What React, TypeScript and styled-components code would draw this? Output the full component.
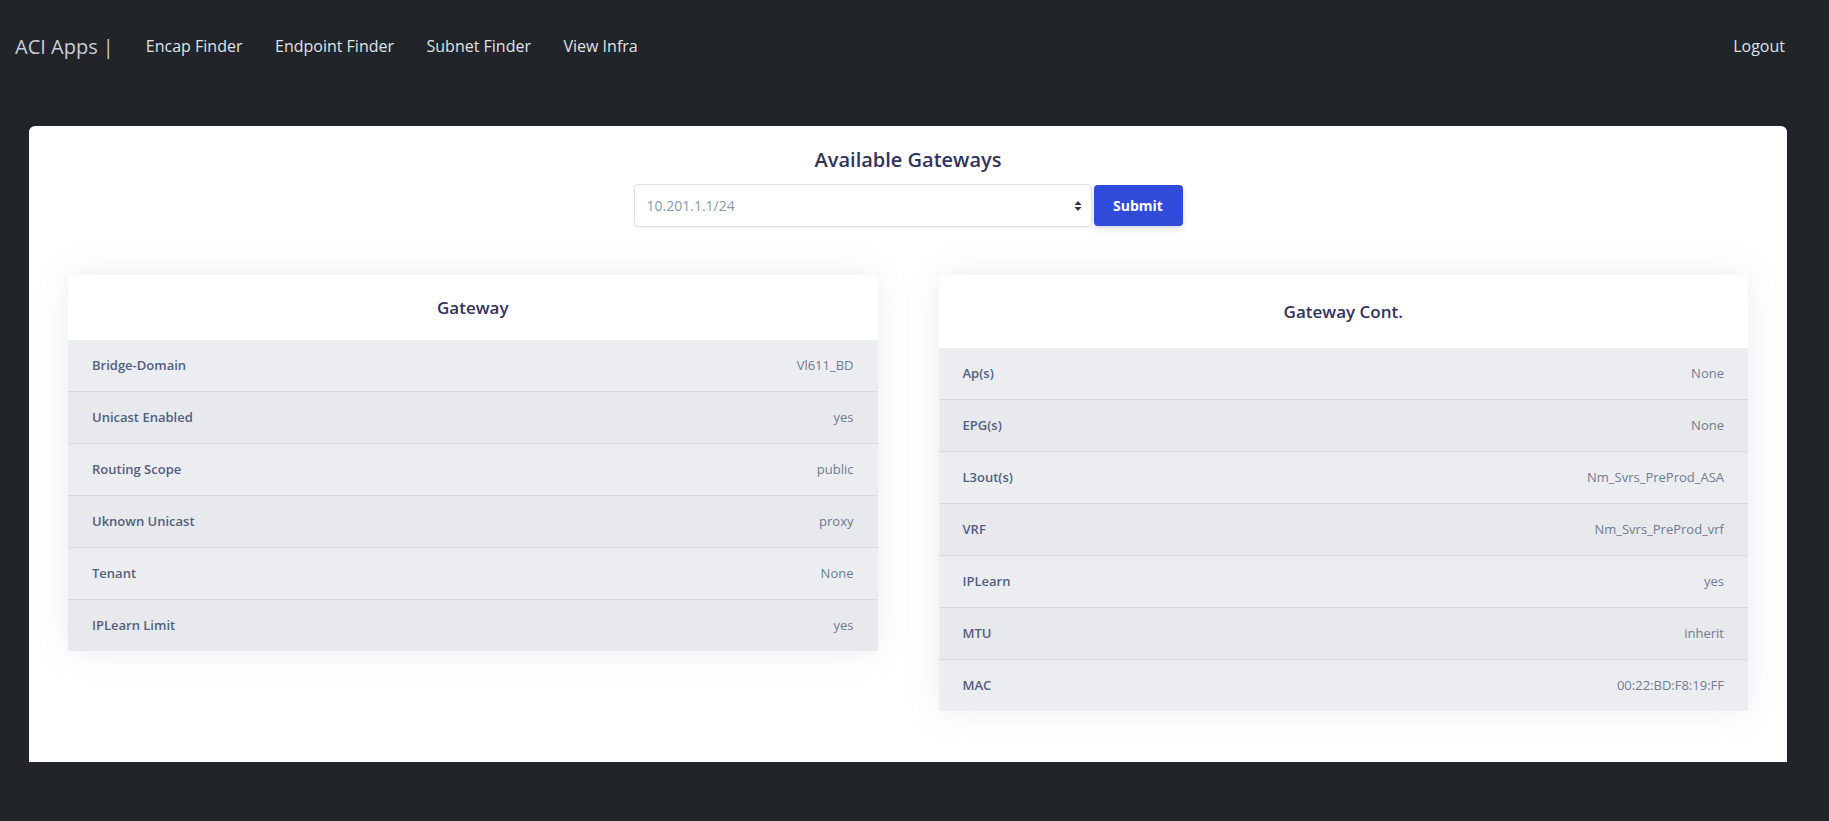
import React from 'react';
import styled, { createGlobalStyle } from 'styled-components';

const GlobalStyle = createGlobalStyle`
  html, body {
    margin: 0;
    padding: 0;
    background: #212429;
  }
  body {
    font-family: "Open Sans", "Noto Sans", sans-serif;
  }
  * {
    box-sizing: border-box;
  }
`;

const NavBar = styled.nav`
  height: 92px;
  display: flex;
  align-items: center;
  padding: 0 44px 0 15px;
`;

const Brand = styled.a`
  font-size: 20px;
  color: #c8cdd5;
  margin-right: 32px;
  text-decoration: none;
`;

const NavLinks = styled.ul`
  display: flex;
  gap: 32.5px;
  margin: 0;
  padding: 0;
  list-style: none;
  flex: 1;
`;

const NavLink = styled.a`
  font-size: 16px;
  color: #dfe3e9;
  text-decoration: none;
`;

const Panel = styled.main`
  margin: 34px 42px 0 29px;
  background: #fff;
  border-radius: 6px 6px 0 0;
  padding: 22px 39px 51px;
`;

const Title = styled.h2`
  margin: 0 0 12px;
  text-align: center;
  font-size: 20px;
  line-height: 24px;
  font-weight: 600;
  color: #32325d;
`;

const FormRow = styled.form`
  display: flex;
  justify-content: center;
  align-items: center;
  gap: 2px;
`;

const SelectWrap = styled.div`
  position: relative;
  width: 458px;
  height: 43px;
`;

const Select = styled.select`
  width: 100%;
  height: 100%;
  appearance: none;
  border: 1px solid #dee1e6;
  border-radius: 4px;
  padding: 0 12px;
  font-family: inherit;
  font-size: 14px;
  color: #8898aa;
  background: #fff;
  box-shadow: 0 1px 2px rgba(50, 50, 93, 0.06);
  outline: none;
`;

const SelectArrows = styled.svg`
  position: absolute;
  right: 10px;
  top: 50%;
  transform: translateY(-50%);
  pointer-events: none;
`;

const SubmitButton = styled.button`
  width: 89px;
  height: 41px;
  border: none;
  border-radius: 4px;
  background: #304ad9;
  color: #fff;
  font-family: inherit;
  font-size: 14px;
  font-weight: 700;
  box-shadow: 0 4px 6px rgba(50, 50, 93, 0.11), 0 1px 3px rgba(0, 0, 0, 0.08);
`;

const CardGrid = styled.div`
  margin-top: 48px;
  display: grid;
  grid-template-columns: 1fr 1fr;
  gap: 61px;
  align-items: start;
`;

const Card = styled.section`
  background: #fff;
  border-radius: 5px 5px 0 0;
  overflow: hidden;
  box-shadow: 0 0 2rem 0 rgba(136, 152, 170, 0.18);
`;

const CardHeader = styled.h3<{ $height: number }>`
  margin: 0;
  height: ${({ $height }) => $height}px;
  display: flex;
  align-items: center;
  justify-content: center;
  font-size: 17px;
  font-weight: 600;
  color: #32325d;
`;

const Row = styled.div<{ $even: boolean }>`
  height: 52px;
  display: flex;
  align-items: center;
  justify-content: space-between;
  padding: 0 24px 2px;
  background: ${({ $even }) => ($even ? '#e8e9ed' : '#ecedf1')};
  border-bottom: 1px solid #d8dadf;
  &:last-child {
    height: 51px;
    border-bottom: none;
  }
`;

const Label = styled.span`
  font-size: 13px;
  font-weight: 600;
  color: #525f7f;
`;

const Value = styled.span`
  font-size: 13px;
  color: #6f7b94;
`;

type Item = [string, string];

const gateway: Item[] = [
  ['Bridge-Domain', 'Vl611_BD'],
  ['Unicast Enabled', 'yes'],
  ['Routing Scope', 'public'],
  ['Uknown Unicast', 'proxy'],
  ['Tenant', 'None'],
  ['IPLearn Limit', 'yes'],
];

const gatewayCont: Item[] = [
  ['Ap(s)', 'None'],
  ['EPG(s)', 'None'],
  ['L3out(s)', 'Nm_Svrs_PreProd_ASA'],
  ['VRF', 'Nm_Svrs_PreProd_vrf'],
  ['IPLearn', 'yes'],
  ['MTU', 'inherit'],
  ['MAC', '00:22:BD:F8:19:FF'],
];

const menus = ['Encap Finder', 'Endpoint Finder', 'Subnet Finder', 'View Infra'];

function InfoCard({ title, items, headerHeight }: { title: string; items: Item[]; headerHeight: number }) {
  return (
    <Card>
      <CardHeader $height={headerHeight}>{title}</CardHeader>
      {items.map(([label, value], i) => (
        <Row key={label} $even={i % 2 === 1}>
          <Label>{label}</Label>
          <Value>{value}</Value>
        </Row>
      ))}
    </Card>
  );
}

export default function App() {
  return (
    <>
      <GlobalStyle />
      <NavBar>
        <Brand href="#">ACI Apps |</Brand>
        <NavLinks>
          {menus.map((m) => (
            <li key={m}>
              <NavLink href="#">{m}</NavLink>
            </li>
          ))}
        </NavLinks>
        <NavLink href="#">Logout</NavLink>
      </NavBar>
      <Panel>
        <Title>Available Gateways</Title>
        <FormRow onSubmit={(e) => e.preventDefault()}>
          <SelectWrap>
            <Select defaultValue="10.201.1.1/24">
              <option>10.201.1.1/24</option>
            </Select>
            <SelectArrows width="8" height="12" viewBox="0 0 8 12">
              <path d="M4 1 L7.5 5 H0.5 Z" fill="#32325d" />
              <path d="M4 11 L7.5 7 H0.5 Z" fill="#32325d" />
            </SelectArrows>
          </SelectWrap>
          <SubmitButton type="submit">Submit</SubmitButton>
        </FormRow>
        <CardGrid>
          <InfoCard title="Gateway" items={gateway} headerHeight={65} />
          <InfoCard title="Gateway Cont." items={gatewayCont} headerHeight={73} />
        </CardGrid>
      </Panel>
    </>
  );
}
